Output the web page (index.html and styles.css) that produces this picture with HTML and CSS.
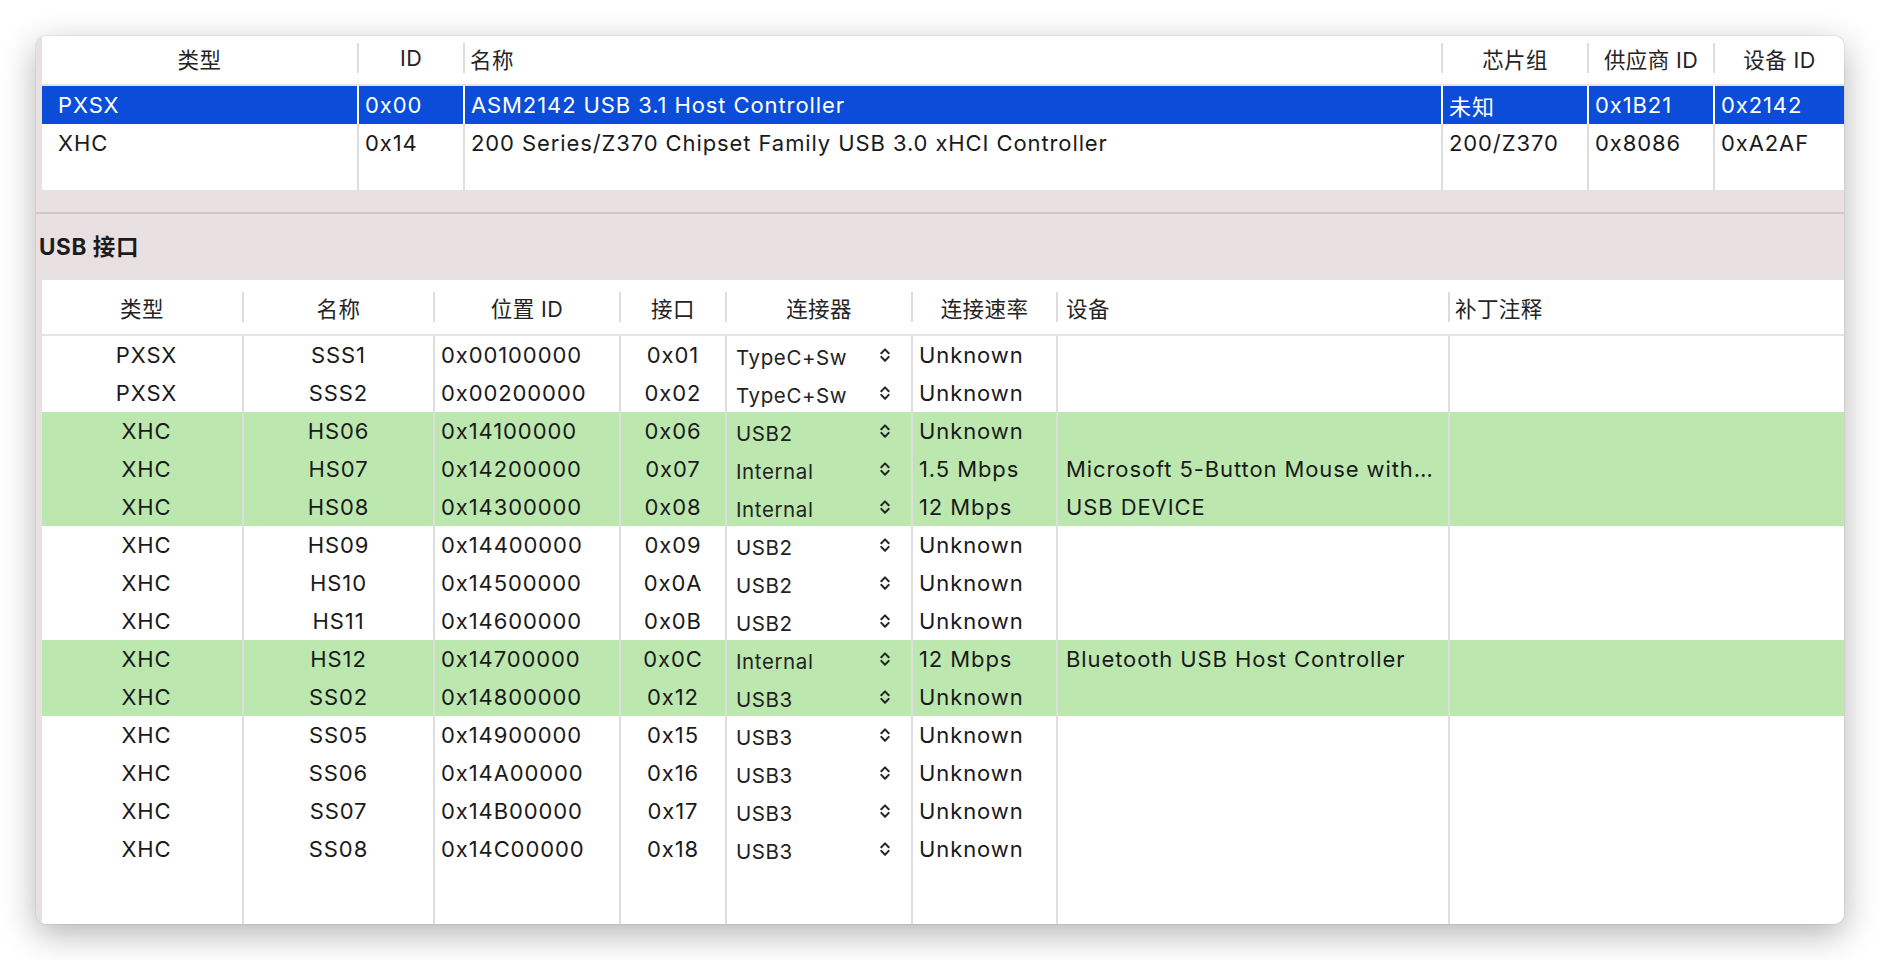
FILE: index.html
```html
<!DOCTYPE html>
<html lang="zh-CN">
<head>
<meta charset="utf-8">
<title>USB</title>
<link rel="stylesheet" href="styles.css">
</head>
<body>
<div class="window">
  <div class="top-table">
    <div class="t-cols top-head">
      <div class="hcell first">类型</div>
      <div class="hcell">ID</div>
      <div class="hcell left">名称</div>
      <div class="hcell">芯片组</div>
      <div class="hcell">供应商 ID</div>
      <div class="hcell">设备 ID</div>
    </div>
    <div class="t-cols trow selected">
      <div class="cell first">PXSX</div>
      <div class="cell">0x00</div>
      <div class="cell">ASM2142 USB 3.1 Host Controller</div>
      <div class="cell">未知</div>
      <div class="cell">0x1B21</div>
      <div class="cell">0x2142</div>
    </div>
    <div class="t-cols trow">
      <div class="cell first">XHC</div>
      <div class="cell">0x14</div>
      <div class="cell">200 Series/Z370 Chipset Family USB 3.0 xHCI Controller</div>
      <div class="cell">200/Z370</div>
      <div class="cell">0x8086</div>
      <div class="cell">0xA2AF</div>
    </div>
    <div class="t-cols tfill">
      <div class="cell first"></div><div class="cell"></div><div class="cell"></div><div class="cell"></div><div class="cell"></div><div class="cell"></div>
    </div>
  </div>

  <div class="section-gap"></div>
  <div class="section-rule"></div>
  <div class="section-title">USB 接口</div>

  <div class="bottom-table">
    <div class="b-cols bottom-head">
      <div class="hcell first">类型</div>
      <div class="hcell">名称</div>
      <div class="hcell">位置 ID</div>
      <div class="hcell">接口</div>
      <div class="hcell">连接器</div>
      <div class="hcell">连接速率</div>
      <div class="hcell left dev">设备</div>
      <div class="hcell left">补丁注释</div>
    </div>

    <div class="b-cols brow">
      <div class="cell first c">PXSX</div><div class="cell c">SSS1</div><div class="cell">0x00100000</div><div class="cell c">0x01</div>
      <div class="cell popup"><span class="ptext">TypeC+Sw</span><svg class="chev" viewBox="0 0 10 18" width="10" height="18"><path d="M1.3 7.3 L5 3.4 L8.7 7.3 M1.3 10.9 L5 14.8 L8.7 10.9"/></svg></div>
      <div class="cell">Unknown</div><div class="cell dev"></div><div class="cell"></div>
    </div>
    <div class="b-cols brow">
      <div class="cell first c">PXSX</div><div class="cell c">SSS2</div><div class="cell">0x00200000</div><div class="cell c">0x02</div>
      <div class="cell popup"><span class="ptext">TypeC+Sw</span><svg class="chev" viewBox="0 0 10 18" width="10" height="18"><path d="M1.3 7.3 L5 3.4 L8.7 7.3 M1.3 10.9 L5 14.8 L8.7 10.9"/></svg></div>
      <div class="cell">Unknown</div><div class="cell dev"></div><div class="cell"></div>
    </div>
    <div class="b-cols brow green">
      <div class="cell first c">XHC</div><div class="cell c">HS06</div><div class="cell">0x14100000</div><div class="cell c">0x06</div>
      <div class="cell popup"><span class="ptext">USB2</span><svg class="chev" viewBox="0 0 10 18" width="10" height="18"><path d="M1.3 7.3 L5 3.4 L8.7 7.3 M1.3 10.9 L5 14.8 L8.7 10.9"/></svg></div>
      <div class="cell">Unknown</div><div class="cell dev"></div><div class="cell"></div>
    </div>
    <div class="b-cols brow green">
      <div class="cell first c">XHC</div><div class="cell c">HS07</div><div class="cell">0x14200000</div><div class="cell c">0x07</div>
      <div class="cell popup"><span class="ptext">Internal</span><svg class="chev" viewBox="0 0 10 18" width="10" height="18"><path d="M1.3 7.3 L5 3.4 L8.7 7.3 M1.3 10.9 L5 14.8 L8.7 10.9"/></svg></div>
      <div class="cell">1.5 Mbps</div><div class="cell dev">Microsoft 5-Button Mouse with…</div><div class="cell"></div>
    </div>
    <div class="b-cols brow green">
      <div class="cell first c">XHC</div><div class="cell c">HS08</div><div class="cell">0x14300000</div><div class="cell c">0x08</div>
      <div class="cell popup"><span class="ptext">Internal</span><svg class="chev" viewBox="0 0 10 18" width="10" height="18"><path d="M1.3 7.3 L5 3.4 L8.7 7.3 M1.3 10.9 L5 14.8 L8.7 10.9"/></svg></div>
      <div class="cell">12 Mbps</div><div class="cell dev">USB DEVICE</div><div class="cell"></div>
    </div>
    <div class="b-cols brow">
      <div class="cell first c">XHC</div><div class="cell c">HS09</div><div class="cell">0x14400000</div><div class="cell c">0x09</div>
      <div class="cell popup"><span class="ptext">USB2</span><svg class="chev" viewBox="0 0 10 18" width="10" height="18"><path d="M1.3 7.3 L5 3.4 L8.7 7.3 M1.3 10.9 L5 14.8 L8.7 10.9"/></svg></div>
      <div class="cell">Unknown</div><div class="cell dev"></div><div class="cell"></div>
    </div>
    <div class="b-cols brow">
      <div class="cell first c">XHC</div><div class="cell c">HS10</div><div class="cell">0x14500000</div><div class="cell c">0x0A</div>
      <div class="cell popup"><span class="ptext">USB2</span><svg class="chev" viewBox="0 0 10 18" width="10" height="18"><path d="M1.3 7.3 L5 3.4 L8.7 7.3 M1.3 10.9 L5 14.8 L8.7 10.9"/></svg></div>
      <div class="cell">Unknown</div><div class="cell dev"></div><div class="cell"></div>
    </div>
    <div class="b-cols brow">
      <div class="cell first c">XHC</div><div class="cell c">HS11</div><div class="cell">0x14600000</div><div class="cell c">0x0B</div>
      <div class="cell popup"><span class="ptext">USB2</span><svg class="chev" viewBox="0 0 10 18" width="10" height="18"><path d="M1.3 7.3 L5 3.4 L8.7 7.3 M1.3 10.9 L5 14.8 L8.7 10.9"/></svg></div>
      <div class="cell">Unknown</div><div class="cell dev"></div><div class="cell"></div>
    </div>
    <div class="b-cols brow green">
      <div class="cell first c">XHC</div><div class="cell c">HS12</div><div class="cell">0x14700000</div><div class="cell c">0x0C</div>
      <div class="cell popup"><span class="ptext">Internal</span><svg class="chev" viewBox="0 0 10 18" width="10" height="18"><path d="M1.3 7.3 L5 3.4 L8.7 7.3 M1.3 10.9 L5 14.8 L8.7 10.9"/></svg></div>
      <div class="cell">12 Mbps</div><div class="cell dev">Bluetooth USB Host Controller</div><div class="cell"></div>
    </div>
    <div class="b-cols brow green">
      <div class="cell first c">XHC</div><div class="cell c">SS02</div><div class="cell">0x14800000</div><div class="cell c">0x12</div>
      <div class="cell popup"><span class="ptext">USB3</span><svg class="chev" viewBox="0 0 10 18" width="10" height="18"><path d="M1.3 7.3 L5 3.4 L8.7 7.3 M1.3 10.9 L5 14.8 L8.7 10.9"/></svg></div>
      <div class="cell">Unknown</div><div class="cell dev"></div><div class="cell"></div>
    </div>
    <div class="b-cols brow">
      <div class="cell first c">XHC</div><div class="cell c">SS05</div><div class="cell">0x14900000</div><div class="cell c">0x15</div>
      <div class="cell popup"><span class="ptext">USB3</span><svg class="chev" viewBox="0 0 10 18" width="10" height="18"><path d="M1.3 7.3 L5 3.4 L8.7 7.3 M1.3 10.9 L5 14.8 L8.7 10.9"/></svg></div>
      <div class="cell">Unknown</div><div class="cell dev"></div><div class="cell"></div>
    </div>
    <div class="b-cols brow">
      <div class="cell first c">XHC</div><div class="cell c">SS06</div><div class="cell">0x14A00000</div><div class="cell c">0x16</div>
      <div class="cell popup"><span class="ptext">USB3</span><svg class="chev" viewBox="0 0 10 18" width="10" height="18"><path d="M1.3 7.3 L5 3.4 L8.7 7.3 M1.3 10.9 L5 14.8 L8.7 10.9"/></svg></div>
      <div class="cell">Unknown</div><div class="cell dev"></div><div class="cell"></div>
    </div>
    <div class="b-cols brow">
      <div class="cell first c">XHC</div><div class="cell c">SS07</div><div class="cell">0x14B00000</div><div class="cell c">0x17</div>
      <div class="cell popup"><span class="ptext">USB3</span><svg class="chev" viewBox="0 0 10 18" width="10" height="18"><path d="M1.3 7.3 L5 3.4 L8.7 7.3 M1.3 10.9 L5 14.8 L8.7 10.9"/></svg></div>
      <div class="cell">Unknown</div><div class="cell dev"></div><div class="cell"></div>
    </div>
    <div class="b-cols brow">
      <div class="cell first c">XHC</div><div class="cell c">SS08</div><div class="cell">0x14C00000</div><div class="cell c">0x18</div>
      <div class="cell popup"><span class="ptext">USB3</span><svg class="chev" viewBox="0 0 10 18" width="10" height="18"><path d="M1.3 7.3 L5 3.4 L8.7 7.3 M1.3 10.9 L5 14.8 L8.7 10.9"/></svg></div>
      <div class="cell">Unknown</div><div class="cell dev"></div><div class="cell"></div>
    </div>
    <div class="b-cols bfill">
      <div class="cell first"></div><div class="cell"></div><div class="cell"></div><div class="cell"></div><div class="cell"></div><div class="cell"></div><div class="cell"></div><div class="cell"></div>
    </div>
  </div>
</div>
</body>
</html>
```

FILE: styles.css
```css
html, body {
  margin: 0;
  padding: 0;
}

body {
  width: 1880px;
  height: 960px;
  overflow: hidden;
  background: #ffffff;
  font-family: "Inter", "Noto Sans CJK SC", sans-serif;
  font-size: 22px;
  letter-spacing: 0.9px;
  color: #1a1a1a;
}

.window {
  margin: 36px 0 0 36px;
  width: 1808px;
  height: 888px;
  background: #e8e0e1;
  border-radius: 10px;
  overflow: hidden;
  box-shadow: 0 10px 34px rgba(0, 0, 0, 0.30), 0 0 0 1px rgba(0, 0, 0, 0.05);
  display: flex;
  flex-direction: column;
}

/* ---------- shared cells ---------- */
.t-cols {
  display: grid;
  grid-template-columns: 315px 106px 978px 146px 126px 131px;
}

.b-cols {
  display: grid;
  grid-template-columns: 200px 191px 186px 106px 186px 145px 392px 396px;
}

.hcell {
  height: 30px;
  display: flex;
  align-items: center;
  justify-content: center;
  border-left: 2px solid #dcdcdc;
  color: #242424;
  white-space: nowrap;
  font-size: 21.5px;
  letter-spacing: 0.4px;
}

.hcell.first {
  border-left: 0;
}

.hcell.left {
  justify-content: flex-start;
  padding-left: 5px;
}

.cell {
  display: flex;
  align-items: center;
  padding-left: 6px;
  border-left: 2px solid #dedede;
  white-space: nowrap;
  overflow: hidden;
}

.cell.first {
  border-left: 0;
}

.cell.c {
  justify-content: center;
  padding-left: 0;
}

.cell.first.c {
  padding-left: 9px;
}

.hcell.dev,
.cell.dev {
  padding-left: 8px;
}

/* ---------- top table ---------- */
.top-table {
  margin-left: 6px;
  height: 154px;
  background: #ffffff;
  display: flex;
  flex-direction: column;
}

.top-head {
  height: 50px;
  align-items: start;
  padding-top: 7px;
  box-sizing: border-box;
  border-bottom: 2px solid #e4e4e4;
}

.trow {
  height: 38px;
}

.trow .cell.first {
  padding-left: 16px;
}

.trow.selected {
  background: #0b4dd9;
  color: #ffffff;
}

.trow.selected .cell {
  border-left-color: #ffffff;
}

.tfill {
  flex: 1;
}

/* ---------- section header ---------- */
.section-gap {
  height: 22px;
}

.section-rule {
  height: 2px;
  background: #d0c7c8;
}

.section-title {
  height: 66px;
  box-sizing: border-box;
  padding-bottom: 4px;
  display: flex;
  align-items: center;
  padding-left: 3px;
  font-weight: 700;
  font-size: 22.5px;
  letter-spacing: 0.6px;
  color: #1c1c1c;
}

/* ---------- bottom table ---------- */
.bottom-table {
  margin-left: 6px;
  flex: 1;
  background: #ffffff;
  display: flex;
  flex-direction: column;
}

.bottom-head {
  height: 54px;
  align-items: center;
  border-bottom: 2px solid #e4e4e4;
}

.brow {
  height: 38px;
}

.brow.green {
  background: #bce8b0;
}

.bfill {
  flex: 1;
}

.popup {
  justify-content: space-between;
  padding-left: 9px;
  padding-right: 21px;
}

.ptext {
  font-size: 20.5px;
  letter-spacing: 0.6px;
  padding-top: 5px;
  color: #222222;
}

.chev {
  fill: none;
  stroke: #262626;
  stroke-width: 2;
  stroke-linecap: round;
  stroke-linejoin: round;
}
```
